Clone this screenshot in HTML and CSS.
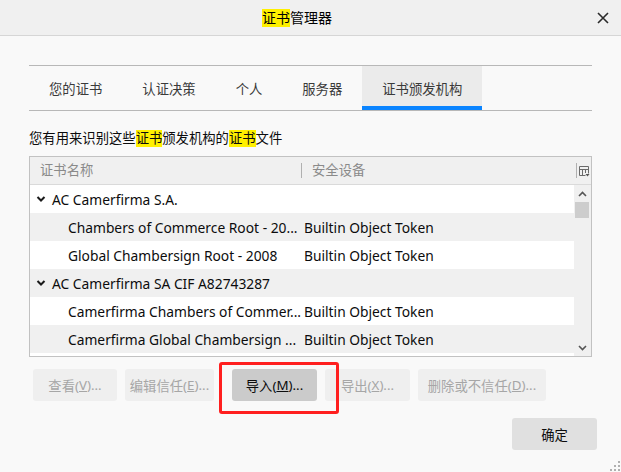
FILE: index.html
```html
<!DOCTYPE html>
<html lang="zh-CN">
<head>
<meta charset="utf-8">
<title>证书管理器</title>
<link rel="stylesheet" href="styles.css">
</head>
<body>
<div class="window">
  <div class="titlebar">
    <div class="title"><span class="hl">证书</span>管理器</div>
    <div class="close">
      <svg width="12" height="12" viewBox="0 0 12 12"><path d="M1 1L11 11M11 1L1 11" stroke="#2b2b2b" stroke-width="1.6" fill="none"/></svg>
    </div>
  </div>
  <div class="content">
    <div class="tabs">
      <div class="tab">您的证书</div>
      <div class="tab">认证决策</div>
      <div class="tab">个人</div>
      <div class="tab">服务器</div>
      <div class="tab selected">证书颁发机构</div>
    </div>
    <div class="desc">您有用来识别这些<span class="hl2">证书</span>颁发机构的<span class="hl2">证书</span>文件</div>
    <div class="tree">
      <div class="thead">
        <div class="th col1">证书名称</div>
        <div class="th col2">安全设备</div>
        <div class="picker">
          <svg width="11" height="12" viewBox="0 0 11 12"><path d="M0.5 1.5H9.5V8.5M0.5 1.5V10.5H6.5M0.5 4.5H9.5M3.5 4.5V10.5M6.5 4.5V8" stroke="#6a6a6a" stroke-width="1" fill="none"/><path d="M6.5 9H10.5L8.5 11.5Z" fill="#555"/></svg>
        </div>
      </div>
      <div class="tbody">
        <div class="rows">
          <div class="row"><div class="c1 parent"><svg class="chev" width="10" height="8" viewBox="0 0 10 8"><path d="M1.5 2L5 5.5L8.5 2" stroke="#1a1a1a" stroke-width="2" fill="none"/></svg>AC Camerfirma S.A.</div><div class="c2"></div></div>
          <div class="row alt"><div class="c1 child">Chambers of Commerce Root - 20...</div><div class="c2">Builtin Object Token</div></div>
          <div class="row"><div class="c1 child">Global Chambersign Root - 2008</div><div class="c2">Builtin Object Token</div></div>
          <div class="row alt"><div class="c1 parent"><svg class="chev" width="10" height="8" viewBox="0 0 10 8"><path d="M1.5 2L5 5.5L8.5 2" stroke="#1a1a1a" stroke-width="2" fill="none"/></svg>AC Camerfirma SA CIF A82743287</div><div class="c2"></div></div>
          <div class="row"><div class="c1 child">Camerfirma Chambers of Commer...</div><div class="c2">Builtin Object Token</div></div>
          <div class="row alt"><div class="c1 child">Camerfirma Global Chambersign ...</div><div class="c2">Builtin Object Token</div></div>
          <div class="row"><div class="c1 child"></div><div class="c2"></div></div>
        </div>
        <div class="scrollbar">
          <div class="arrow"><svg width="9" height="6" viewBox="0 0 9 6"><path d="M1 5L4.5 1.5L8 5" stroke="#555" stroke-width="1.6" fill="none"/></svg></div>
          <div class="thumb"></div>
          <div class="track"></div>
          <div class="arrow"><svg width="9" height="6" viewBox="0 0 9 6"><path d="M1 1L4.5 4.5L8 1" stroke="#555" stroke-width="1.6" fill="none"/></svg></div>
        </div>
      </div>
    </div>
    <div class="buttons">
      <div class="btn disabled b-view">查看(<u>V</u>)...</div>
      <div class="btn disabled b-edit">编辑信任(<u>E</u>)...</div>
      <div class="btn b-import">导入(<u>M</u>)...<span class="mark"></span></div>
      <div class="btn disabled b-export">导出(<u>X</u>)...</div>
      <div class="btn disabled b-delete">删除或不信任(<u>D</u>)...</div>
    </div>
    <div class="footer">
      <div class="btn ok">确定</div>
    </div>
  </div>
  <div class="grip">
    <svg width="10" height="10" viewBox="0 0 10 10" fill="#b0b0b0"><rect x="8" y="0" width="2" height="2"/><rect x="4" y="4" width="2" height="2"/><rect x="8" y="4" width="2" height="2"/><rect x="0" y="8" width="2" height="2"/><rect x="4" y="8" width="2" height="2"/><rect x="8" y="8" width="2" height="2"/></svg>
  </div>
</div>
</body>
</html>
```
FILE: styles.css
```css
* { box-sizing: border-box; }
html, body {
  margin: 0;
  padding: 0;
}
body {
  width: 621px;
  height: 472px;
  background: #f9f9f9;
  font-family: "Noto Sans", "Noto Sans CJK SC", sans-serif;
  font-size: 13.33px;
  color: #0c0c0d;
  overflow: hidden;
}
.window {
  position: relative;
  width: 621px;
  height: 472px;
}
.titlebar {
  height: 36px;
  background: #f0f0f0;
  border-bottom: 1px solid #d6d6d6;
  display: flex;
  align-items: center;
}
.title {
  flex: 1;
  padding-left: 262px;
  font-size: 14px;
  color: #000;
  line-height: 18px;
}
.hl {
  background: #fff000;
  display: inline-block;
  line-height: 18px;
}
.close {
  width: 12px;
  height: 12px;
  margin-right: 12px;
  display: flex;
}
.content {
  padding: 29px 29px 0 29px;
}
.tabs {
  display: flex;
  height: 46px;
  border-top: 1px solid #b8b8b8;
  border-bottom: 1px solid #b8b8b8;
}
.tab {
  padding: 0 20px;
  display: flex;
  align-items: center;
  color: #3a3a3a;
  font-size: 13.33px;
  border-bottom: 4px solid transparent;
  padding-top: 4px;
}
.tab.selected {
  background: #ebebeb;
  border-bottom-color: #0a84ff;
}
.desc {
  margin-top: 19px;
  height: 17px;
  line-height: 17px;
  font-size: 13.33px;
  color: #0c0c0d;
}
.hl2 {
  background: #fff000;
  display: inline-block;
  line-height: 17px;
}
.tree {
  margin-top: 9px;
  border: 1px solid #c2c2c2;
  background: #fff;
}
.thead {
  height: 28px;
  display: flex;
  align-items: center;
  background: #f0f0f0;
  border-bottom: 1px solid #dadada;
  color: #8a8a8a;
}
.th.col1 {
  width: 272px;
  padding-left: 10px;
  border-right: 1px solid #b0b0b0;
  height: 15px;
  line-height: 15px;
}
.th.col2 {
  flex: 1;
  padding-left: 10px;
  height: 15px;
  line-height: 15px;
}
.picker {
  width: 14px;
  height: 15px;
  border-left: 1px solid #b0b0b0;
  padding-left: 2px;
  display: flex;
  align-items: center;
  margin-right: 1px;
}
.tbody {
  height: 171px;
  display: flex;
  overflow: hidden;
}
.rows {
  flex: 1;
  overflow: hidden;
}
.row {
  height: 28px;
  display: flex;
  align-items: center;
  background: #fff;
  font-size: 13.8px;
  color: #0c0c0d;
  white-space: nowrap;
}
.row.alt {
  background: #f0f0f0;
}
.c1 {
  width: 274px;
  overflow: hidden;
}
.c1.parent {
  padding-left: 6px;
  display: flex;
  align-items: center;
}
.chev {
  margin-right: 6px;
}
.c1.child {
  padding-left: 38px;
}
.c2 {
  flex: 1;
}
.scrollbar {
  width: 17px;
  background: #f0f0f0;
  display: flex;
  flex-direction: column;
}
.arrow {
  height: 17px;
  display: flex;
  align-items: center;
  justify-content: center;
}
.thumb {
  height: 16px;
  margin: 0 2px 0 1px;
  background: #cdcdcd;
}
.track {
  flex: 1;
}
.buttons {
  margin-top: 12px;
  padding-left: 4px;
  display: flex;
  gap: 8px;
}
.btn {
  height: 32px;
  display: flex;
  align-items: center;
  justify-content: center;
  border-radius: 3px;
  font-size: 13.33px;
  background: #e0e0e0;
  color: #0c0c0d;
  white-space: nowrap;
}
.btn.disabled {
  background: #efefef;
  color: #a6a6a6;
}
.b-view { width: 84px; }
.b-edit { width: 89px; }
.b-import {
  width: 85px;
  margin-left: 10px;
  background: #cbcbcb;
  position: relative;
}
.b-export { width: 85px; }
.b-delete { width: 128px; }
.mark {
  position: absolute;
  left: -13px;
  top: -7px;
  right: -22px;
  bottom: -13px;
  border: 3px solid #ff1f1f;
  border-radius: 3px;
}
.footer {
  margin-top: 17px;
  display: flex;
  justify-content: flex-end;
  margin-right: -5px;
}
.btn.ok {
  width: 85px;
}
.grip {
  position: absolute;
  right: 1px;
  bottom: 1px;
  display: flex;
}
```
